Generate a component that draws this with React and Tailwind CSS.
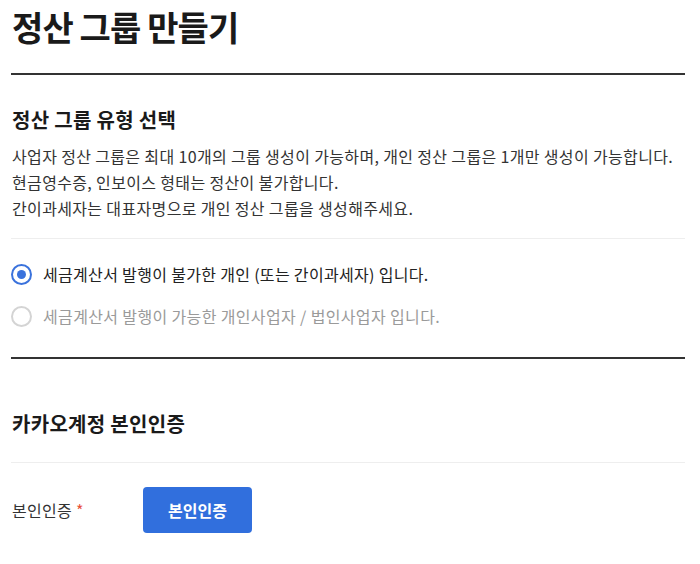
export default function App() {
  const font = { fontFamily: '"Noto Sans CJK KR", "Noto Sans", sans-serif' };
  return (
    <div className="w-[700px] h-[564px] bg-white pl-[11px] pr-[15px] pt-[7px] text-[#1a1a1a]" style={font}>
      <h1 className="text-[34px] leading-[40px] font-bold pl-[1px] tracking-[-0.9px]">정산 그룹 만들기</h1>
      <div className="mt-[26px] h-[2px] bg-[#333]" />

      <h2 className="mt-[31px] text-[20px] leading-[28px] font-bold pl-[1px] tracking-[0.3px]">정산 그룹 유형 선택</h2>
      <div className="mt-[9px] text-[16px] leading-[26px] text-[#333] pl-[1px] tracking-[0.35px]">
        <p>사업자 정산 그룹은 최대 10개의 그룹 생성이 가능하며, 개인 정산 그룹은 1개만 생성이 가능합니다.</p>
        <p>현금영수증, 인보이스 형태는 정산이 불가합니다.</p>
        <p>간이과세자는 대표자명으로 개인 정산 그룹을 생성해주세요.</p>
      </div>
      <div className="mt-[17px] h-px bg-[#eee]" />

      <div className="mt-[22px] flex flex-col gap-[16px]">
        <label className="flex items-center h-[26px] gap-[11px]">
          <span className="w-[21px] h-[21px] rounded-full border-[2px] border-[#3a72dc] flex items-center justify-center">
            <span className="w-[9px] h-[9px] rounded-full bg-[#3a72dc]" />
          </span>
          <span className="text-[16px] text-[#222] tracking-[0.32px]">세금계산서 발행이 불가한 개인 (또는 간이과세자) 입니다.</span>
        </label>
        <label className="flex items-center h-[26px] gap-[11px]">
          <span className="w-[21px] h-[21px] rounded-full border-[2px] border-[#d4d4d4]" />
          <span className="text-[16px] text-[#9a9a9a] tracking-[0.36px]">세금계산서 발행이 가능한 개인사업자 / 법인사업자 입니다.</span>
        </label>
      </div>

      <div className="mt-[28px] h-[2px] bg-[#333]" />

      <h2 className="mt-[51px] text-[20px] leading-[28px] font-bold pl-[1px] tracking-[0.3px]">카카오계정 본인인증</h2>
      <div className="mt-[24px] h-px bg-[#eee]" />

      <div className="mt-[24px] flex items-center">
        <div className="w-[132px] pl-[1px] text-[16px] text-[#333] tracking-[0.3px]">
          본인인증 <span className="text-[#e8513a]">*</span>
        </div>
        <button className="w-[109px] h-[46px] rounded-[4px] bg-[#316fdd] text-white text-[16px] font-bold">본인인증</button>
      </div>
    </div>
  );
}
